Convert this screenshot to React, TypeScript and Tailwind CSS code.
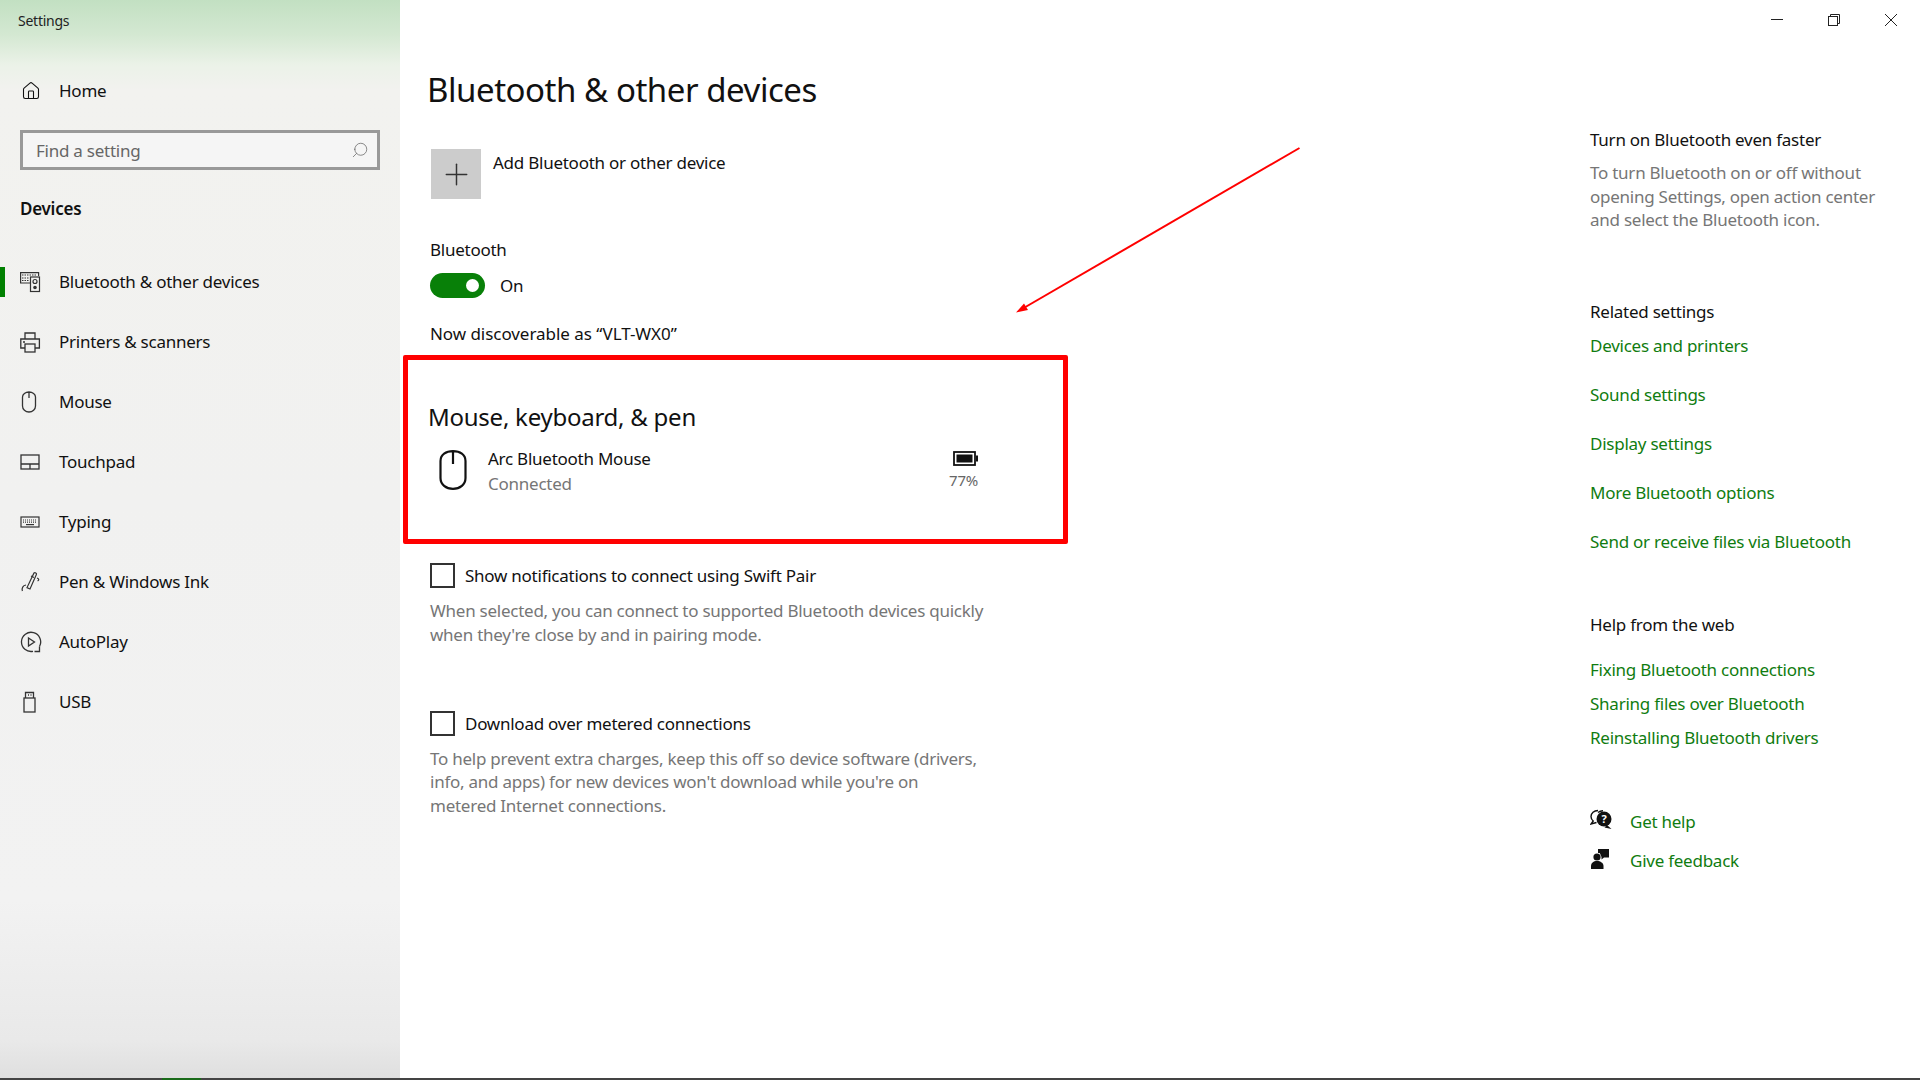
import { Search, Home, Plus } from 'lucide-react'

const font = { fontFamily: '"Noto Sans", sans-serif' }

const NAV = [
  { label: 'Bluetooth & other devices', icon: <DevicesIcon />, active: true },
  { label: 'Printers & scanners', icon: <PrinterIcon /> },
  { label: 'Mouse', icon: <MouseIcon /> },
  { label: 'Touchpad', icon: <TouchpadIcon /> },
  { label: 'Typing', icon: <KeyboardIcon /> },
  { label: 'Pen & Windows Ink', icon: <PenIcon /> },
  { label: 'AutoPlay', icon: <AutoPlayIcon /> },
  { label: 'USB', icon: <UsbIcon /> },
]

function DevicesIcon() {
  return (
    <svg width="21" height="21" viewBox="0 0 21 21" fill="none" stroke="#333" strokeWidth="1.2">
      <path d="M10 11H.6V.6h18v3.5" />
      <path d="M2 3h15M2 6h7M2 8.5h7" strokeDasharray="1.5 1" />
      <rect x="10.5" y="5" width="9" height="14.5" />
      <circle cx="15" cy="9.5" r="2" />
      <circle cx="15" cy="15.5" r="1.2" fill="#333" />
    </svg>
  )
}
function PrinterIcon() {
  return (
    <svg width="21" height="21" viewBox="0 0 21 21" fill="none" stroke="#333" strokeWidth="1.3">
      <path d="M5 7V1h10v6" />
      <path d="M5 16H.8V7h18.6v9H15" />
      <rect x="5" y="12" width="10" height="8" />
      <path d="M3 10h2" />
    </svg>
  )
}
function MouseIcon() {
  return (
    <svg width="18" height="22" viewBox="0 0 18 22" fill="none" stroke="#333" strokeWidth="1.3">
      <path d="M2.5 6a6.5 5 0 0 1 13 0v9a6.5 6 0 0 1-13 0zM9 1v6" />
    </svg>
  )
}
function TouchpadIcon() {
  return (
    <svg width="20" height="16" viewBox="0 0 20 16" fill="none" stroke="#333" strokeWidth="1.3">
      <rect x="1" y="1" width="18" height="14" />
      <path d="M1 10h18M10 10v5" />
    </svg>
  )
}
function KeyboardIcon() {
  return (
    <svg width="20" height="12" viewBox="0 0 20 12" fill="none" stroke="#333" strokeWidth="1.2">
      <rect x="1" y="1" width="18" height="10" />
      <path d="M3 4h14M3 6.2h14" strokeDasharray="1 1" />
      <path d="M6 8.6h8" />
    </svg>
  )
}
function PenIcon() {
  return (
    <svg width="22" height="22" viewBox="0 0 22 22" fill="none" stroke="#333" strokeWidth="1.2">
      <path d="M14 2c1-.8 3 .3 2.4 1.6L10 18l-3-1.4z" />
      <path d="M11 5l3 1.5M17 7c2 .6 2.4 2 .6 3M6 14c-3 .5-4.6 3-3.6 6" />
    </svg>
  )
}
function AutoPlayIcon() {
  return (
    <svg width="22" height="22" viewBox="0 0 22 22" fill="none" stroke="#333" strokeWidth="1.3">
      <path d="M13 20.3A9.6 9.6 0 1 1 19.5 15.5" />
      <path d="M8.5 7l6 4-6 4z" />
      <path d="M19.5 15.5v5h-5" />
    </svg>
  )
}
function UsbIcon() {
  return (
    <svg width="18" height="22" viewBox="0 0 18 22" fill="none" stroke="#333" strokeWidth="1.3">
      <rect x="4" y="7" width="11" height="14" />
      <path d="M5.5 7V1.5h8V7M8 4h1M10.5 4h1" />
    </svg>
  )
}

function Checkbox({ label }: { label: string }) {
  return (
    <div className="flex items-center gap-[10px]">
      <span className="w-[25px] h-[25px] border-2 border-[#333] bg-white" />
      <span className="text-[17px] text-[#111]">{label}</span>
    </div>
  )
}

function GreenLink({ children }: { children: string }) {
  return <p className="text-[17px] text-[#107c10] leading-[24px]">{children}</p>
}

export default function App() {
  return (
    <div className="relative flex h-[1080px] w-[1920px] overflow-hidden bg-white tracking-[-0.25px]" style={font}>
      <aside className="w-[400px] h-full flex flex-col bg-[linear-gradient(180deg,#c2e0c2_0px,#d4e8d2_35px,#ebf2e8_65px,#f2f2ef_90px,#f1f1f0_500px,#f2f2f2_900px,#e9e9e9_1040px,#dfdfdf_1078px)]">
        <p className="pl-[18px] pt-[10px] h-[62px] text-[14px] text-[#222]">Settings</p>
        <div className="flex items-center h-[58px] pl-[21px] gap-[18px] text-[17px] text-[#111]">
          <Home size={20} strokeWidth={1.3} />
          <span>Home</span>
        </div>
        <div className="mx-[20px] mt-[10px] h-[40px] border-[3px] border-[#999] bg-[#f5f5f5] flex items-center justify-between pl-[13px] pr-[8px] text-[17px] text-[#666]">
          <span className="mt-[1px]">Find a setting</span>
          <Search size={18} strokeWidth={1} className="-scale-x-100" />
        </div>
        <p className="pl-[20px] mt-[27px] text-[17px] font-semibold text-[#111] leading-[24px]">Devices</p>
        <nav className="mt-[31px] flex flex-col">
          {NAV.map(n => (
            <div key={n.label} className="relative flex items-center h-[60px] text-[17px] text-[#111]">
              {n.active && <span className="absolute left-0 top-[15px] w-[5px] h-[30px] bg-[#008000]" />}
              <span className="w-[59px] pl-[20px] flex items-center">{n.icon}</span>
              <span>{n.label}</span>
            </div>
          ))}
        </nav>
      </aside>

      <main className="flex-1 pl-[27px] flex">
        <div className="w-[770px] shrink-0">
          <h1 className="pt-[65px] text-[33px] leading-[50px] text-[#111] tracking-[-0.46px]">Bluetooth &amp; other devices</h1>
          <div className="mt-[34px] ml-[4px] flex gap-[12px]">
            <div className="w-[50px] h-[50px] bg-[#cccccc] flex items-center justify-center">
              <Plus size={35} strokeWidth={1} color="#333" />
            </div>
            <span className="text-[17px] leading-[24px] mt-[2px] text-[#111]">Add Bluetooth or other device</span>
          </div>
          <p className="ml-[3px] mt-[39px] text-[17px] leading-[24px] text-[#111]">Bluetooth</p>
          <div className="ml-[3px] mt-[11px] flex items-center gap-[15px]">
            <span className="relative w-[55px] h-[25px] rounded-full bg-[#088008]">
              <span className="absolute right-[6px] top-[6px] w-[13px] h-[13px] rounded-full bg-white" />
            </span>
            <span className="text-[17px] text-[#111]">On</span>
          </div>
          <p className="ml-[3px] mt-[23px] text-[17px] leading-[24px] text-[#111] tracking-[-0.05px]">Now discoverable as “VLT-WX0”</p>

          <section className="-ml-[24px] mt-[9px] w-[665px] h-[189px] border-[5px] border-[#ff0000] rounded-[2px] pl-[20px]">
            <h2 className="mt-[39px] text-[24px] leading-[36px] text-[#111]">Mouse, keyboard, &amp; pen</h2>
            <div className="mt-[12px] flex">
              <svg width="28" height="40" viewBox="0 0 28 40" fill="none" stroke="#111" strokeWidth="2.2" className="ml-[11px] mt-[3px]">
                <path d="M1.5 11C1.5 4.5 7 1.2 14 1.2s12.500 3.300 12.500 9.800v17c0 6.500-5.500 10.800-12.500 10.800S1.500 34.500 1.500 28zM14 1.200V14" />
              </svg>
              <div className="ml-[21px]">
                <p className="text-[17px] leading-[24px] text-[#111]">Arc Bluetooth Mouse</p>
                <p className="text-[17px] leading-[24px] mt-[1px] text-[#767676]">Connected</p>
              </div>
              <div className="ml-auto mr-[85px] flex flex-col items-end">
                <svg width="25" height="15" viewBox="0 0 25 15" className="mt-[4px]">
                  <rect x="1" y="1" width="21" height="13" fill="none" stroke="#111" strokeWidth="1.8" />
                  <rect x="3.500" y="3.500" width="16" height="8" fill="#111" />
                  <rect x="23" y="4.500" width="2" height="6" fill="#111" />
                </svg>
                <span className="text-[15px] leading-[20px] mt-[4px] text-[#666]">77%</span>
              </div>
            </div>
          </section>

          <div className="ml-[3px] mt-[19px]">
            <Checkbox label="Show notifications to connect using Swift Pair" />
            <p className="mt-[11px] text-[17px] leading-[24px] text-[#767676]">
              When selected, you can connect to supported Bluetooth devices quickly
              <br />
              when they're close by and in pairing mode.
            </p>
          </div>
          <div className="ml-[3px] mt-[64px]">
            <Checkbox label="Download over metered connections" />
            <p className="mt-[10px] text-[17px] leading-[23.5px] text-[#767676]">
              To help prevent extra charges, keep this off so device software (drivers,
              <br />
              info, and apps) for new devices won't download while you're on
              <br />
              metered Internet connections.
            </p>
          </div>
        </div>

        <div className="ml-[393px] w-[300px] pt-[128px]">
          <p className="text-[17px] leading-[24px] text-[#111]">Turn on Bluetooth even faster</p>
          <p className="mt-[9px] text-[17px] leading-[23.5px] text-[#767676]">
            To turn Bluetooth on or off without opening Settings, open action center and select the Bluetooth icon.
          </p>
          <p className="mt-[68px] text-[17px] leading-[24px] text-[#111]">Related settings</p>
          <div className="mt-[10px] flex flex-col gap-[25px]">
            <GreenLink>Devices and printers</GreenLink>
            <GreenLink>Sound settings</GreenLink>
            <GreenLink>Display settings</GreenLink>
            <GreenLink>More Bluetooth options</GreenLink>
            <GreenLink>Send or receive files via Bluetooth</GreenLink>
          </div>
          <p className="mt-[59px] text-[17px] leading-[24px] text-[#111]">Help from the web</p>
          <div className="mt-[21px] flex flex-col gap-[10px]">
            <GreenLink>Fixing Bluetooth connections</GreenLink>
            <GreenLink>Sharing files over Bluetooth</GreenLink>
            <GreenLink>Reinstalling Bluetooth drivers</GreenLink>
          </div>
          <div className="mt-[60px] flex items-center gap-[17px]">
            <svg width="23" height="22" viewBox="0 0 23 22" className="shrink-0 -mt-[4px]">
              <path d="M8 1.500C4 1.500 1 4 1 7.500c0 2 1 3.500 2.200 4.500L1 15l5.500-1.500" fill="none" stroke="#111" strokeWidth="1.400" />
              <path d="M8 3.500c1.500-1.300 3-1.800 5-1.800" fill="none" stroke="#111" strokeWidth="1.400" />
              <circle cx="14" cy="10" r="7.500" fill="#111" />
              <path d="M17 16l4.500 4-7-1.500z" fill="#111" />
              <text x="14" y="14" textAnchor="middle" fontSize="11" fontWeight="700" fill="#fff" fontFamily="Noto Sans, sans-serif">?</text>
            </svg>
            <GreenLink>Get help</GreenLink>
          </div>
          <div className="mt-[15px] flex items-center gap-[17px]">
            <svg width="23" height="22" viewBox="0 0 23 22" className="shrink-0 -mt-[4px]">
              <circle cx="7" cy="9" r="3.600" fill="#111" />
              <path d="M1 21v-3c0-3 2.500-5 6-5s6.500 2 6.500 5v3z" fill="#111" />
              <path d="M8 1h11v8.500h-5l-2.500 2V9" fill="#111" />
              <path d="M8 1h4v4H8z" fill="#111" />
            </svg>
            <GreenLink>Give feedback</GreenLink>
          </div>
        </div>
      </main>

      <div className="absolute top-[14px] right-[23px] flex items-start gap-[45px]">
        <svg width="12" height="12" viewBox="0 0 12 12" fill="none" stroke="#222" strokeWidth="1">
          <path d="M0 5.500h12" />
        </svg>
        <svg width="12" height="12" viewBox="0 0 12 12" fill="none" stroke="#222" strokeWidth="1">
          <rect x="0.500" y="2.500" width="9" height="9" />
          <path d="M2.500 2.500V.5h9v9h-2" />
        </svg>
        <svg width="12" height="12" viewBox="0 0 12 12" fill="none" stroke="#222" strokeWidth="1">
          <path d="M0 0l12 12M12 0L0 12" />
        </svg>
      </div>

      {/* annotation arrow */}
      <svg className="absolute left-[1010px] top-[140px]" width="300" height="180" viewBox="0 0 300 180" fill="none">
        <path d="M289.500 8L12 169" stroke="#ff0000" strokeWidth="2" />
        <path d="M6 172.500l8-9 4 6.500z" fill="#ff0000" />
      </svg>

      {/* taskbar sliver */}
      <div className="absolute left-0 bottom-0 w-full h-[2px] bg-[#444]">
        <div className="ml-[162px] w-[39px] h-full bg-[#1a6b1a]" />
      </div>
    </div>
  )
}
